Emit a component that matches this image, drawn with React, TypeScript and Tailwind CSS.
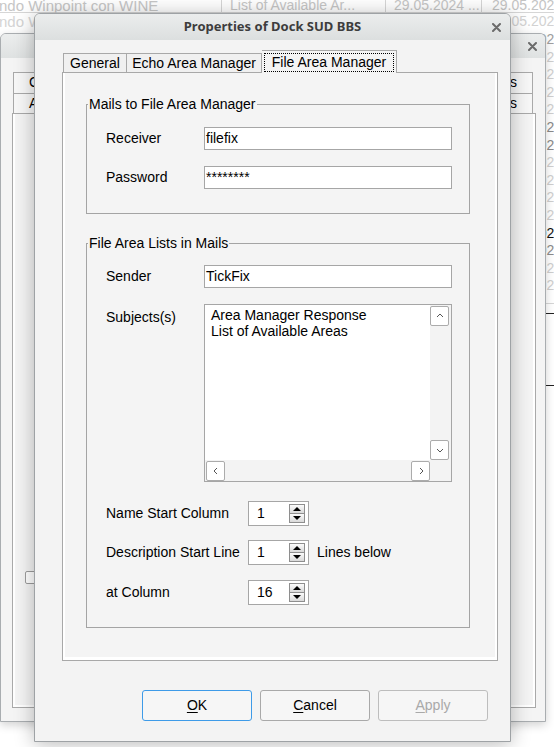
import React from "react";

const light = "text-[#c6c6c6]";

const colColors = [
  "text-[#c4c4c4]",
  "text-[#d2d2d2]",
  "text-[#a0a0a0]",
  "text-[#cfcfcf]",
  "text-[#cfcfcf]",
  "text-[#cfcfcf]",
  "text-[#cfcfcf]",
  "text-[#8a8a8a]",
  "text-[#8a8a8a]",
  "text-[#cfcfcf]",
  "text-[#cfcfcf]",
  "text-[#cfcfcf]",
  "text-[#cfcfcf]",
  "text-[#111111]",
  "text-[#8c8c8c]",
  "text-[#cfcfcf]",
  "text-[#cfcfcf]",
];

function CloseX() {
  return (
    <svg width="9" height="9" viewBox="0 0 9 9">
      <path d="M1 1L8 8M8 1L1 8" stroke="#6b6b6b" strokeWidth="2" strokeLinecap="round" />
    </svg>
  );
}

function Chevron({ dir }: { dir: "up" | "down" | "left" | "right" }) {
  const d =
    dir === "up"
      ? "M1 5L4 2L7 5"
      : dir === "down"
      ? "M1 3L4 6L7 3"
      : dir === "left"
      ? "M5 1L2 4L5 7"
      : "M3 1L6 4L3 7";
  return (
    <svg width="8" height="8" viewBox="0 0 8 8">
      <path d={d} fill="none" stroke="#555555" strokeWidth="1" />
    </svg>
  );
}

function SBtn({ dir }: { dir: "up" | "down" | "left" | "right" }) {
  return (
    <div className="flex h-[20px] w-[19px] items-center justify-center rounded-[2px] border border-[#ababab] bg-white">
      <Chevron dir={dir} />
    </div>
  );
}

function Field({ children }: { children: React.ReactNode }) {
  return (
    <div className="h-[23px] w-[248px] border border-[#a6a6a6] bg-white pl-px leading-[21px]">
      {children}
    </div>
  );
}

function Spin({ value }: { value: string }) {
  return (
    <div className="flex h-[25px] w-[61px] items-center border border-[#a6a6a6] bg-white pl-[8px] pr-[3px]">
      <span className="flex-1 leading-[15px]">{value}</span>
      <div className="flex h-[19px] w-[16px] flex-col">
        <div className="flex h-[10px] items-center justify-center border border-[#8e8e8e] bg-gradient-to-b from-[#fbfbfb] to-[#d9d9d9]">
          <svg width="8" height="4" viewBox="0 0 8 4">
            <path d="M0 4L4 0L8 4Z" fill="#000" />
          </svg>
        </div>
        <div className="-mt-px flex h-[10px] items-center justify-center border border-[#8e8e8e] bg-gradient-to-b from-[#fbfbfb] to-[#d9d9d9]">
          <svg width="8" height="4" viewBox="0 0 8 4">
            <path d="M0 0L8 0L4 4Z" fill="#000" />
          </svg>
        </div>
      </div>
    </div>
  );
}

function Group({
  title,
  top,
  bottom,
  children,
}: {
  title: string;
  top: string;
  bottom: string;
  children: React.ReactNode;
}) {
  return (
    <div className={`ml-[23px] w-[384px] border border-[#a4a4a4] pl-[19px] ${top} ${bottom}`}>
      <div className="-ml-[18px] -mt-[8px] w-fit bg-[#f4f4f4] px-px leading-[15px]">{title}</div>
      {children}
    </div>
  );
}

function BehindTab({ children, right }: { children: React.ReactNode; right?: boolean }) {
  return (
    <div
      className={
        right
          ? "w-[110px] border border-b-0 border-[#a9a9a9] bg-[#f7f7f7] pr-[15px] text-right leading-[19px]"
          : "w-[110px] border border-b-0 border-[#a9a9a9] bg-[#f7f7f7] pl-[15px] leading-[19px]"
      }
    >
      {children}
    </div>
  );
}

export default function App() {
  const rows = Array.from({ length: 17 }, (_, i) => i);
  return (
    <div className="relative h-[747px] w-[554px] overflow-hidden bg-white font-['Liberation_Sans',Arial,sans-serif] text-[14px] text-black">
      {/* background table */}
      <div className="absolute left-0 top-[-2px] w-[580px] text-[14px]">
        {rows.map((i) => (
          <div
            key={i}
            className={
              i === 0
                ? "flex h-[15px] items-center border-b border-[#d6d6d6] leading-[15px]"
                : i === 1
                ? "flex h-[18px] items-center leading-[16px]"
                : "flex h-[17.6px] items-center leading-[16px]"
            }
          >
            <div className={`-ml-[1px] w-[222px] text-[15px] ${i === 0 ? light : "text-[#d4d4d4]"}`}>ndo Winpoint con WINE</div>
            <div className={`h-full w-[164px] border-l border-[#d6d6d6] pl-[8px] ${i === 0 ? light : "text-[#d4d4d4]"}`}>
              List of Available Ar...
            </div>
            <div className={`h-full w-[96px] border-l border-[#d6d6d6] pl-[8px] ${i === 0 ? light : "text-[#d4d4d4]"}`}>
              29.05.2024 ...
            </div>
            <div className={`h-full border-l border-[#d6d6d6] pl-[10px] ${colColors[i]}`}>29.05.2024 ...</div>
          </div>
        ))}
      </div>
      <div className="absolute left-[540px] top-[303px] h-px w-[20px] bg-[#d6d6d6]" />
      <div className="absolute left-[540px] top-[313px] h-[73px] w-[20px] border-y border-[#222222]" />

      {/* window behind */}
      <div className="absolute left-0 top-[33px] flex h-[689px] w-[546px] flex-col rounded-t-[6px] border border-[#a9adb0] bg-[#f4f4f4] shadow-[0_3px_10px_rgba(0,0,0,0.18)]">
        <div className="flex h-[24px] items-center justify-end rounded-t-[5px] bg-gradient-to-b from-[#eceeee] to-[#dfe2e2] pr-[8px]">
          <CloseX />
        </div>
        <div className="pl-[11px] pr-[10px] pt-[14px]">
          <div className="flex h-[21px] justify-between pl-px pr-[2px]">
            <BehindTab>Common</BehindTab>
            <BehindTab right>Links</BehindTab>
          </div>
          <div className="flex h-[20px] justify-between pl-px pr-[2px]">
            <BehindTab>Areas</BehindTab>
            <BehindTab right>Groups</BehindTab>
          </div>
          <div className="h-[595px] w-[524px] border border-[#a9a9a9] bg-[#f4f4f4] pl-[12px] pt-[457px] shadow-[inset_2px_0_0_#fff,inset_-2px_0_0_#fff,inset_0_-2px_0_#fff]">
            <div className="h-[13px] w-[13px] rounded-[2px] border border-[#9c9c9c] bg-white" />
          </div>
        </div>
      </div>

      {/* main dialog */}
      <div className="absolute left-[34px] top-[13px] flex h-[729px] w-[477px] flex-col rounded-t-[6px] border border-[#9ea2a5] bg-[#f3f3f3] shadow-[0_2px_20px_rgba(0,0,0,0.28)]">
        <div className="relative flex h-[26px] items-center justify-center rounded-t-[5px] bg-gradient-to-b from-[#ebeded] to-[#dcdfdf]">
          <span className="font-['Noto_Sans',sans-serif] text-[13px] font-bold text-[#3d3d3d]">
            Properties of Dock SUD BBS
          </span>
          <span className="absolute right-[9px] top-[9px] flex">
            <CloseX />
          </span>
        </div>

        <div className="flex flex-1 flex-col pl-[27px] pr-[12px] pt-[10px]">
          {/* tabs */}
          <div className="flex h-[22px] items-end pl-px">
            <div className="flex h-[19px] w-[64px] items-center justify-center border border-b-0 border-[#a8a8a8] bg-[#f0f0f0]">
              General
            </div>
            <div className="flex h-[19px] w-[135px] items-center justify-center border border-b-0 border-l-0 border-[#a8a8a8] bg-[#f0f0f0]">
              Echo Area Manager
            </div>
            <div className="relative z-10 -mb-px h-[23px] w-[135px] border border-b-0 border-l-0 border-[#a8a8a8] bg-[#f4f4f4] px-[2px] pb-[1px] pt-[2px]">
              <div className="flex h-full items-center justify-center border border-dotted border-[#000]">
                File Area Manager
              </div>
            </div>
          </div>

          {/* panel */}
          <div className="h-[589px] w-[436px] border border-[#a8a8a8] bg-[#f4f4f4] shadow-[inset_2px_0_0_#fff,inset_-2px_0_0_#fff,inset_0_-3px_0_#fff]">
            <Group title="Mails to File Area Manager" top="mt-[31px]" bottom="pb-[24px]">
              <div className="mt-[15px] flex h-[23px] items-center">
                <span className="w-[98px]">Receiver</span>
                <Field>filefix</Field>
              </div>
              <div className="mt-[16px] flex h-[23px] items-center">
                <span className="w-[98px]">Password</span>
                <Field>********</Field>
              </div>
            </Group>

            <Group title="File Area Lists in Mails" top="mt-[29px]" bottom="pb-[22px]">
              <div className="mt-[14px] flex h-[23px] items-center">
                <span className="w-[98px]">Sender</span>
                <Field>TickFix</Field>
              </div>
              <div className="mt-[16px] flex items-start">
                <span className="flex h-[26px] w-[98px] items-center">Subjects(s)</span>
                <div className="grid h-[178px] w-[248px] grid-cols-[1fr_21px] grid-rows-[1fr_21px] border border-[#a6a6a6] bg-white">
                  <div className="pl-[6px] pt-[2px] leading-[16px]">
                    <div>Area Manager Response</div>
                    <div>List of Available Areas</div>
                  </div>
                  <div className="flex flex-col justify-between bg-[#f3f3f3] pt-px">
                    <SBtn dir="up" />
                    <SBtn dir="down" />
                  </div>
                  <div className="flex justify-between bg-[#f3f3f3] pl-px pt-px">
                    <SBtn dir="left" />
                    <SBtn dir="right" />
                  </div>
                  <div className="bg-[#f3f3f3]" />
                </div>
              </div>
              <div className="mt-[19px] flex items-center">
                <span className="w-[142px]">Name Start Column</span>
                <Spin value="1" />
              </div>
              <div className="mt-[14px] flex items-center">
                <span className="w-[142px]">Description Start Line</span>
                <Spin value="1" />
                <span className="ml-[8px]">Lines below</span>
              </div>
              <div className="mt-[15px] flex items-center">
                <span className="w-[142px]">at Column</span>
                <Spin value="16" />
              </div>
            </Group>
          </div>

          {/* buttons */}
          <div className="mr-[10px] mt-[29px] flex justify-end gap-[8px]">
            <div className="flex h-[31px] w-[110px] items-center justify-center rounded-[3px] border border-[#3e9be8] bg-[#f6f6f6]">
              <span>
                <span className="underline underline-offset-2">O</span>K
              </span>
            </div>
            <div className="flex h-[31px] w-[110px] items-center justify-center rounded-[3px] border border-[#a9a9a9] bg-[#f6f6f6]">
              <span>
                <span className="underline underline-offset-2">C</span>ancel
              </span>
            </div>
            <div className="flex h-[31px] w-[110px] items-center justify-center rounded-[3px] border border-[#bdbdbd] bg-[#f6f6f6] text-[#a9a9a9]">
              <span>
                <span className="underline underline-offset-2">A</span>pply
              </span>
            </div>
          </div>
        </div>
      </div>
    </div>
  );
}
